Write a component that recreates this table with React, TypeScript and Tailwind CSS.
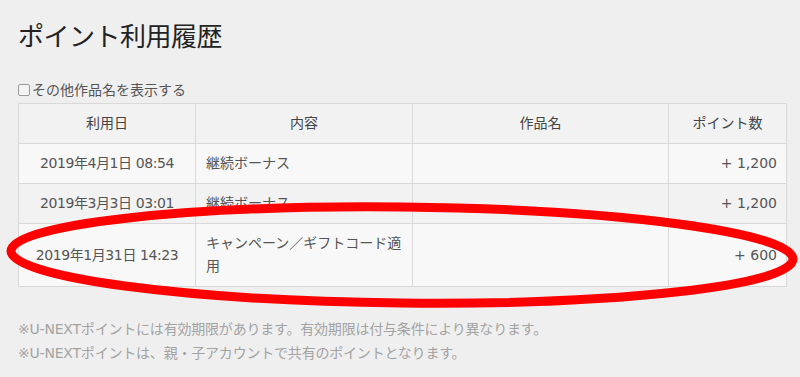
import React from "react";

const rows = [
  { date: "2019年4月1日 08:54", detail: "継続ボーナス", title: "", points: "+ 1,200", bg: "bg-[#f8f8f8]" },
  { date: "2019年3月3日 03:01", detail: "継続ボーナス", title: "", points: "+ 1,200", bg: "bg-[#f2f2f2]" },
  { date: "2019年1月31日 14:23", detail: "キャンペーン／ギフトコード適用", title: "", points: "+ 600", bg: "bg-[#f8f8f8]" },
];

export default function App() {
  return (
    <div
      className="relative w-[800px] h-[377px] overflow-hidden bg-[#efefef] text-[#555]"
      style={{ fontFamily: '"DejaVu Sans", "Noto Sans CJK JP", sans-serif' }}
    >
      <div className="px-[18px] pt-[19px]">
        <h1 className="text-[26px] leading-[36px] text-[#222] font-normal tracking-[-0.5px]">ポイント利用履歴</h1>

        {/* toggle for work titles */}
        <label className="mt-[25px] flex items-center text-[14px] leading-[20px] text-[#555]">
          <span className="w-[12px] h-[12px] border border-[#999] rounded-[2px] bg-[#f4f4f4] mr-[2px]" />
          その他作品名を表示する
        </label>

        <table className="mt-[3px] w-[768px] border-collapse table-fixed text-[14px] leading-[23px]">
          <colgroup>
            <col className="w-[177px]" />
            <col className="w-[217px]" />
            <col className="w-[256px]" />
            <col className="w-[118px]" />
          </colgroup>
          <thead>
            <tr className="bg-[#f2f2f2] text-[#444]">
              <th className="border border-[#d9d9d9] font-normal py-2 text-center">利用日</th>
              <th className="border border-[#d9d9d9] font-normal py-2 text-center">内容</th>
              <th className="border border-[#d9d9d9] font-normal py-2 text-center">作品名</th>
              <th className="border border-[#d9d9d9] font-normal py-2 text-center">ポイント数</th>
            </tr>
          </thead>
          <tbody>
            {rows.map((r) => (
              <tr key={r.date} className={r.bg}>
                <td className="border border-[#d9d9d9] py-2 text-center tracking-[-0.4px]">{r.date}</td>
                <td className="border border-[#d9d9d9] py-2 px-[10px]">{r.detail}</td>
                <td className="border border-[#d9d9d9] py-2 px-[10px]">{r.title}</td>
                <td className="border border-[#d9d9d9] py-2 px-[9px] text-right">{r.points}</td>
              </tr>
            ))}
          </tbody>
        </table>

        <div className="mt-[30px] text-[14px] leading-[24px] text-[#a3a3a3] tracking-[-0.2px]">
          <p>※U-NEXTポイントには有効期限があります。有効期限は付与条件により異なります。</p>
          <p>※U-NEXTポイントは、親・子アカウントで共有のポイントとなります。</p>
        </div>
      </div>

      {/* hand-drawn highlight ring */}
      <svg className="absolute inset-0 pointer-events-none" width="800" height="377" viewBox="0 0 800 377">
        <ellipse cx="402" cy="255" rx="391" ry="48" fill="none" stroke="#ff0000" strokeWidth="9" transform="rotate(0.6 402 255)" />
      </svg>
    </div>
  );
}
